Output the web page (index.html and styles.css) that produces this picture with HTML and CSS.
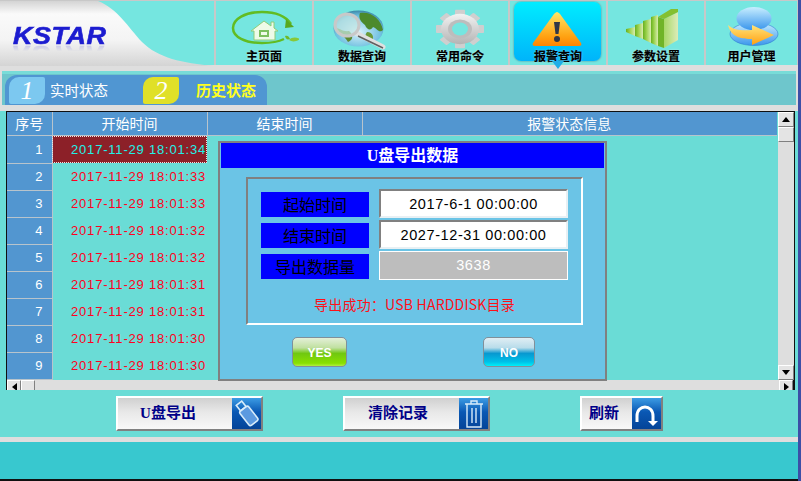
FILE: index.html
```html
<!DOCTYPE html>
<html lang="en">
<head>
    <meta charset="UTF-8">
    <title>KSTAR</title>
    <link rel="stylesheet" href="styles.css">
</head>
<body>
<div class="screen">
    <header class="header">
        <div class="logo">
            <svg class="logo-bg" width="214" height="65" viewBox="0 0 214 65">
                <defs>
                    <linearGradient id="logoGrad" x1="0" y1="0" x2="0" y2="1">
                        <stop offset="0" stop-color="#d4d4d4"/>
                        <stop offset=".2" stop-color="#fafafa"/>
                        <stop offset=".6" stop-color="#f4f4f4"/>
                        <stop offset="1" stop-color="#d4d4d4"/>
                    </linearGradient>
                </defs>
                <path d="M0 0H98C118 8 128 26 142 41C158 57 182 62 214 65H0Z" fill="url(#logoGrad)"/>
            </svg>
            <span class="logo-text">KSTAR</span>
        </div>
        <nav class="nav">
            <div class="nav-tab">
                <svg class="nav-icon" width="70" height="46" viewBox="0 0 70 46">
                    <path d="M62 18C56 9 45 6 33 6C16 6 4 13 4 22C4 31 16 37 33 37C41 37 49 36 55 33" fill="none" stroke="#62bc22" stroke-width="2.5"/>
                    <path d="M57 13L65 21L56 22Z" fill="#58a81e"/>
                    <path d="M56 30C58 29 60 30 61 33C58 34 57 33 56 30Z" fill="#70b828"/>
                    <path d="M60 34C63 31 67 31 71 33C67 36 63 36 60 34Z" fill="#88c838"/>
                    <path d="M22 25L35 15L42 20V16H45V22L49 25H46V34H25V25Z" fill="#eefbe8" stroke="#90cc78"/>
                    <rect x="31" y="25" width="8" height="5" fill="none" stroke="#7cc060" stroke-width="2"/>
                </svg>
                <span class="nav-label">主页面</span>
            </div>
            <div class="nav-tab">
                <svg class="nav-icon" width="70" height="46" viewBox="0 0 70 46">
                    <defs>
                        <radialGradient id="globeGrad" cx=".5" cy=".6" r=".6">
                            <stop offset="0" stop-color="#d8f2fa"/>
                            <stop offset=".75" stop-color="#70c0e0"/>
                            <stop offset="1" stop-color="#3a88a8"/>
                        </radialGradient>
                    </defs>
                    <ellipse cx="31.5" cy="22.5" rx="25" ry="18" fill="url(#globeGrad)"/>
                    <path d="M9 22C12 28 18 30 21 36C27 34 26 28 22 25C16 26 12 22 9 22Z" fill="#5c8a30"/>
                    <path d="M33 7C44 5 54 13 56 24C52 28 50 22 46 21C44 25 40 24 38 19C34 16 31 12 33 7Z" fill="#4c8a2c"/>
                    <path d="M40 26C46 26 48 32 44 37C38 36 37 30 40 26Z" fill="#6a9a38"/>
                    <path d="M29 27L56 41" stroke="#e0e0e0" stroke-width="5" stroke-linecap="round"/>
                    <path d="M31 30L56 42" stroke="#606060" stroke-width="1.5"/>
                    <ellipse cx="20" cy="19" rx="12" ry="11" fill="#c8e8e4" fill-opacity=".7" stroke="#c8c8c8" stroke-width="3"/>
                </svg>
                <span class="nav-label">数据查询</span>
            </div>
            <div class="nav-tab">
                <svg class="nav-icon" width="70" height="46" viewBox="0 0 70 46">
                    <defs>
                        <linearGradient id="gearGrad" x1="0" y1="0" x2="0" y2="1">
                            <stop offset="0" stop-color="#f2f2f2"/>
                            <stop offset="1" stop-color="#b4b4b4"/>
                        </linearGradient>
                    </defs>
                    <g transform="translate(35 23) scale(1 .8)" fill="#cfcfcf">
                        <rect x="-5" y="-24" width="10" height="48" rx="1"/>
                        <rect x="-5" y="-24" width="10" height="48" rx="1" transform="rotate(45)"/>
                        <rect x="-5" y="-24" width="10" height="48" rx="1" transform="rotate(90)"/>
                        <rect x="-5" y="-24" width="10" height="48" rx="1" transform="rotate(135)"/>
                        <circle r="19" fill="url(#gearGrad)"/>
                        <circle r="12" fill="#bdbdbd"/>
                        <circle r="8" fill="#75e6e0"/>
                    </g>
                </svg>
                <span class="nav-label">常用命令</span>
            </div>
            <div class="nav-tab nav-tab-active">
                <svg class="nav-icon" width="70" height="46" viewBox="0 0 70 46">
                    <defs>
                        <linearGradient id="warnGrad" x1="0" y1="0" x2="0" y2="1">
                            <stop offset="0" stop-color="#ffe668"/>
                            <stop offset=".7" stop-color="#ffa414"/>
                            <stop offset="1" stop-color="#ff8400"/>
                        </linearGradient>
                    </defs>
                    <path d="M34 6C35 6 36 7 37 8L58 37C59 39 58 40 56 40H12C10 40 9 39 10 37L31 8C32 7 33 6 34 6Z" fill="url(#warnGrad)"/>
                    <path d="M31 16H37L35.5 28H32.5Z" fill="#303848"/>
                    <circle cx="34" cy="33" r="3" fill="#303848"/>
                </svg>
                <span class="nav-label">报警查询</span>
            </div>
            <div class="nav-tab">
                <svg class="nav-icon" width="70" height="46" viewBox="0 0 70 46">
                    <defs>
                        <linearGradient id="barGrad" x1="0" y1="0" x2="1" y2="0">
                            <stop offset="0" stop-color="#68b020"/>
                            <stop offset=".4" stop-color="#98d048"/>
                            <stop offset="1" stop-color="#d8ecb0"/>
                        </linearGradient>
                        <linearGradient id="blockGrad" x1="0" y1="0" x2="1" y2="0">
                            <stop offset="0" stop-color="#a8d868"/>
                            <stop offset="1" stop-color="#dcecb8"/>
                        </linearGradient>
                    </defs>
                    <path d="M5 23L14 21V30L5 26Z" fill="url(#barGrad)"/>
                    <path d="M14 19L22 17V33L14 30Z" fill="url(#barGrad)"/>
                    <path d="M22 15L30 13V37L22 33Z" fill="url(#barGrad)"/>
                    <path d="M30 11L37 9V40L30 37Z" fill="url(#barGrad)"/>
                    <path d="M37 11L43 13V42L37 40Z" fill="#70b428"/>
                    <path d="M43 13L57 6V34L43 42Z" fill="url(#blockGrad)"/>
                    <path d="M37 11L50 3H57V6L43 13Z" fill="#84c030"/>
                </svg>
                <span class="nav-label">参数设置</span>
            </div>
            <div class="nav-tab">
                <svg class="nav-icon" width="70" height="46" viewBox="0 0 70 46">
                    <defs>
                        <linearGradient id="userGrad" x1="0" y1="0" x2="0" y2="1">
                            <stop offset="0" stop-color="#c8eeff"/>
                            <stop offset="1" stop-color="#3a96ec"/>
                        </linearGradient>
                        <linearGradient id="arrowGrad" x1="0" y1="0" x2="0" y2="1">
                            <stop offset="0" stop-color="#ffe47a"/>
                            <stop offset="1" stop-color="#ffa012"/>
                        </linearGradient>
                    </defs>
                    <ellipse cx="37" cy="28" rx="24" ry="11.5" fill="url(#userGrad)" stroke="#2f80d0" stroke-width=".6"/>
                    <ellipse cx="37" cy="12.5" rx="17.5" ry="11.5" fill="url(#userGrad)"/>
                    <path d="M11 19C16 24 26 25 35 24V19L57 29L35 39V33C26 33 14 32 11 19Z" fill="url(#arrowGrad)"/>
                </svg>
                <span class="nav-label">用户管理</span>
            </div>
        </nav>
    </header>

    <div class="tabbar">
        <div class="pill">
            <div class="pill-item">
                <span class="pill-num">1</span>
                <span class="pill-label">实时状态</span>
            </div>
            <div class="pill-item pill-item-on">
                <span class="pill-num">2</span>
                <span class="pill-label">历史状态</span>
            </div>
        </div>
    </div>

    <main class="panel">
        <div class="grid-wrap">
            <div class="grid-main">
                <table class="grid">
                    <colgroup>
                        <col class="col-no"><col class="col-time"><col class="col-time"><col class="col-info">
                    </colgroup>
                    <thead>
                        <tr><th>序号</th><th>开始时间</th><th>结束时间</th><th>报警状态信息</th></tr>
                    </thead>
                    <tbody>
                        <tr class="selected"><td class="no">1</td><td class="time">2017-11-29 18:01:34</td><td></td><td></td></tr>
                        <tr><td class="no">2</td><td class="time">2017-11-29 18:01:33</td><td></td><td></td></tr>
                        <tr><td class="no">3</td><td class="time">2017-11-29 18:01:33</td><td></td><td></td></tr>
                        <tr><td class="no">4</td><td class="time">2017-11-29 18:01:32</td><td></td><td></td></tr>
                        <tr><td class="no">5</td><td class="time">2017-11-29 18:01:32</td><td></td><td></td></tr>
                        <tr><td class="no">6</td><td class="time">2017-11-29 18:01:31</td><td></td><td></td></tr>
                        <tr><td class="no">7</td><td class="time">2017-11-29 18:01:31</td><td></td><td></td></tr>
                        <tr><td class="no">8</td><td class="time">2017-11-29 18:01:30</td><td></td><td></td></tr>
                        <tr><td class="no">9</td><td class="time">2017-11-29 18:01:30</td><td></td><td></td></tr>
                    </tbody>
                </table>
                <div class="vscroll">
                    <span class="sb-btn"><i class="arrow-up"></i></span>
                    <span class="sb-btn"></span>
                    <span class="sb-fill"></span>
                    <span class="sb-btn"><i class="arrow-down"></i></span>
                </div>
            </div>
            <div class="hscroll">
                <span class="sb-btn sb-small"><i class="arrow-left"></i></span>
                <span class="sb-btn sb-small"></span>
                <span class="sb-fill"></span>
                <span class="sb-btn sb-small"><i class="arrow-right"></i></span>
            </div>
        </div>

        <div class="dialog">
            <div class="dialog-title">U盘导出数据</div>
            <div class="group">
                <div class="field">
                    <span class="field-label">起始时间</span>
                    <span class="field-value">2017-6-1 00:00:00</span>
                </div>
                <div class="field">
                    <span class="field-label">结束时间</span>
                    <span class="field-value">2027-12-31 00:00:00</span>
                </div>
                <div class="field">
                    <span class="field-label">导出数据量</span>
                    <span class="field-value field-disabled">3638</span>
                </div>
                <div class="message">导出成功：USB HARDDISK目录</div>
            </div>
            <div class="dialog-actions">
                <span class="gel gel-yes">YES</span>
                <span class="gel gel-no">NO</span>
            </div>
        </div>
    </main>

    <div class="actions">
        <button class="action action-export">
            <span class="action-text">U盘导出</span>
            <span class="action-icon">
                <svg width="29" height="31" viewBox="0 0 29 31">
                    <g transform="rotate(-38 14 15)" fill="none" stroke="#d8ecfa" stroke-width="1.6">
                        <rect x="9" y="10" width="11" height="18" rx="2" fill="#5c9ae0"/>
                        <rect x="11" y="3" width="7" height="7"/>
                    </g>
                </svg>
            </span>
        </button>
        <button class="action action-clear">
            <span class="action-text">清除记录</span>
            <span class="action-icon">
                <svg width="29" height="31" viewBox="0 0 29 31" fill="none" stroke="#d8ecfa" stroke-width="1.4">
                    <path d="M6 6H24M12 6V3H18V6"/>
                    <path d="M8 6V29H22V6"/>
                    <path d="M13 10V25M17 10V25"/>
                </svg>
            </span>
        </button>
        <button class="action action-refresh">
            <span class="action-text">刷新</span>
            <span class="action-icon">
                <svg width="29" height="31" viewBox="0 0 29 31" fill="none" stroke="#ffffff">
                    <path d="M5 24V18C5 6 21 6 21 18V24" stroke-width="3"/>
                    <path d="M16 23H26L21 28Z" fill="#ffffff" stroke="none"/>
                </svg>
            </span>
        </button>
    </div>

    <footer class="footer"></footer>
</div>
</body>
</html>
```

FILE: styles.css
```css
html, body {
    margin: 0;
    padding: 0;
}

body {
    width: 801px;
    height: 481px;
    overflow: hidden;
    background-color: #3c4ea6;
    font-family: "Noto Sans CJK SC", "Liberation Sans", sans-serif;
}

.screen {
    width: 798px;
    height: 479px;
    display: flex;
    flex-direction: column;
    background-color: #dedede;
    border-bottom: 2px solid #101010;
}

/* header */
.header {
    height: 65px;
    flex: none;
    display: flex;
    background-color: #75e6e0;
    border-top: 1px solid #c8c8c8;
    box-sizing: border-box;
}

.logo {
    width: 214px;
    flex: none;
    position: relative;
    padding: 21px 0 0 13px;
    box-sizing: border-box;
}

.logo-bg {
    position: absolute;
    top: 0;
    left: 0;
}

.logo-text {
    position: relative;
    display: block;
    width: 85px;
    font-family: "Liberation Sans", sans-serif;
    font-weight: bold;
    font-style: italic;
    font-size: 24px;
    line-height: 28px;
    letter-spacing: 0.5px;
    color: #1c1cd0;
    -webkit-text-stroke: 0.6px #1c1cd0;
    transform: scaleX(1.12);
    transform-origin: left top;
    -webkit-box-reflect: below -10px linear-gradient(transparent 60%, rgba(255, 255, 255, 0.35));
}

.nav {
    flex: 1;
    display: flex;
    background-color: #c8c8c8;
    padding-left: 2px;
    gap: 2px;
}

.nav-tab {
    width: 96px;
    flex: none;
    position: relative;
    display: flex;
    flex-direction: column;
    align-items: center;
    background-color: #75e6e0;
}

.nav-tab:last-child {
    width: 91px;
}

.nav-icon {
    margin-top: 5px;
    height: 46px;
    position: relative;
}

.nav-label {
    position: relative;
    font-size: 12px;
    font-weight: bold;
    line-height: 12px;
    margin-top: -2px;
    color: #000;
    -webkit-text-stroke: 0.2px #000;
    text-shadow: 0 0 2px rgba(255, 255, 255, 0.6);
}

.nav-tab-active::before {
    content: "";
    position: absolute;
    top: 1px;
    left: 4px;
    right: 5px;
    height: 59px;
    border-radius: 7px;
    background: linear-gradient(#00ecff, #00b4fa);
    box-shadow: 0 0 2px #507888;
}

.nav-tab-active::after {
    content: "";
    position: absolute;
    top: 60px;
    left: 42px;
    border-left: 6px solid transparent;
    border-right: 6px solid transparent;
    border-top: 8px solid #1eaee8;
}

/* history tabs */
.tabbar {
    height: 34px;
    flex: none;
    margin: 6px 2px 0 2px;
    padding: 1px 0 0 3px;
    box-sizing: border-box;
    background-color: #6ec6cc;
    border-top: 3px solid #78dcd8;
}

.pill {
    width: 262px;
    height: 30px;
    display: flex;
    background-color: #5096d2;
    border-radius: 12px 12px 0 0;
}

.pill-item {
    display: flex;
    align-items: center;
    padding-left: 4px;
    width: 134px;
    box-sizing: border-box;
}

.pill-item-on {
    width: 128px;
}

.pill-num {
    width: 36px;
    height: 27px;
    margin-top: 1px;
    display: flex;
    align-items: center;
    justify-content: center;
    font-family: "Liberation Serif", serif;
    font-style: italic;
    font-size: 26px;
    color: #fff;
    background-color: #7cc8f0;
    border-radius: 10px 2px 10px 2px;
}

.pill-label {
    margin-left: 5px;
    padding-bottom: 2px;
    font-size: 14.5px;
    color: #fff;
}

.pill-item-on .pill-num {
    background-color: #e0e028;
}

.pill-item-on .pill-label {
    margin-left: 17px;
    font-size: 15px;
    font-weight: bold;
    color: #ffff20;
}

/* table panel */
.panel {
    flex: 1;
    position: relative;
    margin-top: 6px;
    padding: 0 3px 0 4px;
    background-color: #6adcd6;
    display: flex;
    flex-direction: column;
}

.grid-wrap {
    height: 279px;
    flex: none;
    margin-left: 2px;
    display: flex;
    flex-direction: column;
    background-color: #6adcd6;
    border-top: 1px solid #101010;
    border-left: 1px solid #101010;
    border-right: 2px solid #101010;
    box-sizing: border-box;
}

.grid-main {
    flex: 1;
    display: flex;
    min-height: 0;
}

.grid {
    width: 770px;
    table-layout: fixed;
    border-collapse: collapse;
    flex: none;
    align-self: flex-start;
}

.col-no { width: 45px; }
.col-time { width: 155px; }
.col-info { width: 415px; }

.grid th {
    height: 23px;
    padding: 0;
    background-color: #5296d0;
    color: #fff;
    font-weight: normal;
    font-size: 14px;
    line-height: 23px;
    border-right: 1px solid #b8c4cc;
    border-bottom: 1px solid #b8c4cc;
}

.grid th:last-child {
    border-right: none;
    padding-right: 1px;
}

.grid td {
    height: 27px;
    padding: 0;
}

.grid .no {
    background-color: #5296d0;
    color: #fff;
    font-family: "Liberation Sans", sans-serif;
    font-size: 13px;
    text-align: right;
    padding-right: 9px;
    border-right: 1px solid #b8c4cc;
    border-bottom: 1px solid #b8c4cc;
    box-sizing: border-box;
}

.grid .time {
    font-family: "Liberation Sans", sans-serif;
    font-size: 13px;
    letter-spacing: 0.8px;
    text-align: right;
    padding-right: 1px;
    color: #ff0020;
    box-sizing: border-box;
}

.grid .selected .time {
    background-color: #8c2028;
    color: #20f0e8;
    outline: 1px dotted #f0e0e0;
    outline-offset: -1px;
}

.vscroll {
    width: 16px;
    flex: none;
    margin-left: 1px;
    display: flex;
    flex-direction: column;
    background-color: #dedede;
}

.hscroll {
    height: 10px;
    flex: none;
    display: flex;
    background-color: #dedede;
    overflow: hidden;
}

.sb-btn {
    width: 16px;
    height: 15px;
    flex: none;
    display: flex;
    align-items: center;
    justify-content: center;
    background-color: #e4e4e4;
    border: 1px solid;
    border-color: #fff #808080 #808080 #fff;
    box-sizing: border-box;
}

.sb-small {
    width: 14px;
    height: 14px;
}

.sb-fill {
    flex: 1;
}

.arrow-up {
    border-left: 4px solid transparent;
    border-right: 4px solid transparent;
    border-bottom: 5px solid #000;
}

.arrow-down {
    border-left: 4px solid transparent;
    border-right: 4px solid transparent;
    border-top: 5px solid #000;
}

.arrow-left {
    border-top: 4px solid transparent;
    border-bottom: 4px solid transparent;
    border-right: 5px solid #000;
}

.arrow-right {
    border-top: 4px solid transparent;
    border-bottom: 4px solid transparent;
    border-left: 5px solid #000;
}

/* dialog */
.dialog {
    position: absolute;
    top: 30px;
    left: 218px;
    width: 389px;
    height: 240px;
    box-sizing: border-box;
    padding: 0 1px;
    background-color: #6bc4e6;
    border: 2px solid #808080;
}

.dialog-title {
    height: 25px;
    background-color: #0000ff;
    color: #fff;
    font-family: "Liberation Serif", "Noto Sans CJK SC", serif;
    font-size: 16px;
    font-weight: bold;
    line-height: 25px;
    text-align: center;
}

.group {
    width: 337px;
    height: 148px;
    margin: 9px 0 0 25px;
    box-sizing: border-box;
    border: 2px solid;
    border-color: #808080 #fff #fff #808080;
    padding: 9px 0 0 13px;
}

.field {
    height: 31px;
    display: flex;
    align-items: center;
    gap: 10px;
}

.field-label {
    width: 108px;
    height: 25px;
    flex: none;
    margin-top: 2px;
    background-color: #0000ff;
    color: #000;
    font-size: 16px;
    line-height: 25px;
    text-align: center;
}

.field-value {
    width: 189px;
    height: 29px;
    box-sizing: border-box;
    flex: none;
    background-color: #fff;
    border: 2px solid;
    border-color: #808080 #e8f0f4 #e8f0f4 #808080;
    font-family: "Liberation Sans", sans-serif;
    font-size: 14.5px;
    letter-spacing: 0.6px;
    line-height: 27px;
    text-align: center;
    color: #000;
}

.field-disabled {
    background-color: #bdbdbd;
    border: 1px solid #fff;
    color: #fff;
    line-height: 27px;
}

.message {
    margin-top: 13px;
    font-size: 14px;
    letter-spacing: 0.2px;
    line-height: 20px;
    color: #ff1018;
    text-align: center;
    padding-right: 13px;
}

.dialog-actions {
    display: flex;
    align-items: center;
    margin: 12px 0 0 71px;
    gap: 136px;
}

.gel {
    height: 30px;
    box-sizing: border-box;
    display: block;
    border: 1px solid #80909a;
    border-radius: 5px;
    color: #fff;
    font-family: "Liberation Sans", sans-serif;
    font-size: 12px;
    font-weight: bold;
    line-height: 30px;
    text-align: center;
}

.gel-yes {
    width: 55px;
    background: linear-gradient(#e4f0d8, #c0e0a0 35%, #70c810 55%, #88e000 90%, #b0f040);
}

.gel-no {
    width: 52px;
    background: linear-gradient(#e0eef4, #b8dcea 35%, #0898d0 55%, #00c0e8 85%, #00f0f8);
}

/* bottom buttons */
.actions {
    height: 47px;
    flex: none;
    box-sizing: border-box;
    background-color: #6adcd6;
    display: flex;
    align-items: center;
    padding-left: 116px;
}

.action {
    height: 35px;
    padding: 0;
    box-sizing: border-box;
    display: flex;
    background: linear-gradient(#d0d0d0, #e8e8e8 45%, #f8f8f8);
    border: 2px solid;
    border-color: #fff #808080 #808080 #fff;
    cursor: pointer;
}

.action-text {
    flex: 1;
    font-family: "Liberation Serif", "Noto Sans CJK SC", serif;
    font-size: 15px;
    font-weight: bold;
    line-height: 31px;
    color: #000088;
    text-align: center;
}

.action-icon {
    width: 29px;
    height: 31px;
    flex: none;
    background: linear-gradient(#3c9ce4, #0a58b4 45%, #044498);
}

.action-export { width: 147px; }
.action-export .action-text { padding-right: 14px; }
.action-clear { width: 147px; margin-left: 80px; }
.action-clear .action-text { padding-right: 8px; }
.action-refresh { width: 83px; margin-left: 90px; }
.action-refresh .action-text { padding-right: 6px; }

.footer {
    flex: none;
    height: 37px;
    margin-top: 5px;
    background-color: #38c8cf;
}
```
